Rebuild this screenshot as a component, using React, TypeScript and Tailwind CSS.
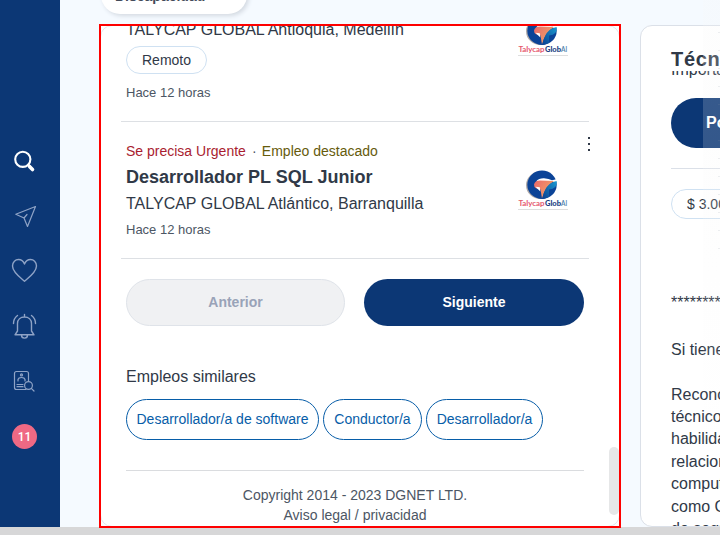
import React from "react";

const Logo = ({ className = "" }: { className?: string }) => (
  <svg className={className} width="52" height="42" viewBox="0 0 52 42">
    <defs>
      <linearGradient id="flame" x1="0" y1="0" x2="1" y2="0.6">
        <stop offset="0" stopColor="#e9686a" />
        <stop offset="1" stopColor="#f0a567" />
      </linearGradient>
      <linearGradient id="sea" x1="1" y1="0" x2="0" y2="1">
        <stop offset="0" stopColor="#1a9ad0" />
        <stop offset="1" stopColor="#0a3f91" />
      </linearGradient>
    </defs>
    <ellipse cx="22.500" cy="15.300" rx="14.500" ry="13.800" fill="#b0aaa8" />
    <ellipse cx="24" cy="14.800" rx="14.700" ry="14.200" fill="#0b4397" />
    <path d="M18 11.500 Q21 8 26 8.200 Q31 8.500 34 10.300 L37.300 9.500 L41 8 L41 12 L36 12 Z" fill="#fff" />
    <path d="M16 14.500 Q17 10.500 22 10.500 L36 11 Q27.500 16 24 28.500 L22.500 19.500 Q16 19 16 14.500 Z" fill="url(#flame)" />
    <path d="M38.700 11 Q39.500 19 31 19.500 L31 27 L24.300 29 Q27 13 38.700 11 Z" fill="url(#sea)" />
    <path d="M17.500 16.800 L21.800 17.200 L22.300 21.500 Z" fill="#fff" />
    <text x="0.500" y="36" fontSize="7.800" fontWeight="700" fontFamily="Lato, sans-serif" textLength="26" lengthAdjust="spacingAndGlyphs" fill="#e5576c">Talycap</text>
    <text x="27" y="36" fontSize="7.800" fontWeight="900" fontFamily="Lato, sans-serif" textLength="16" lengthAdjust="spacingAndGlyphs" fill="#173d80">Glob</text>
    <text x="43" y="36" fontSize="7.800" fontWeight="700" fontFamily="Lato, sans-serif" textLength="6" lengthAdjust="spacingAndGlyphs" fill="#5787b0">Al</text>
    <path d="M0 39.500H50" stroke="#dedede" strokeWidth="1" />
  </svg>
);

const Sidebar = () => (
  <aside className="w-[60px] shrink-0 bg-[#0c3775] text-[#8fa3c6]">
    <svg width="60" height="460" viewBox="0 0 60 460" fill="none" stroke="currentColor" strokeWidth="1.200" strokeLinecap="round" strokeLinejoin="round">
      <g stroke="#fff">
        <circle cx="22.800" cy="159.300" r="7.600" strokeWidth="2.100" />
        <path d="M28.300 164.800 L30 166.500" strokeWidth="2.400" />
        <path d="M29.500 166.500 L32.500 169.500" strokeWidth="3.600" />
      </g>
      <path d="M35.500 206.500 L15.800 214.300 L24 218 L27.500 226.500 Z M24 218 L27 214.500" />
      <path d="M24.500 281.300 C20 277.500 12.500 272 12.500 266 C12.500 261.800 15.500 259.500 18.500 259.500 C21.500 259.500 23.500 261.500 24.500 264 C25.500 261.500 27.500 259.500 30.500 259.500 C33.500 259.500 36.500 261.800 36.500 266 C36.500 272 29 277.500 24.500 281.300 Z" strokeWidth="1.400" />
      <path d="M24.500 314.500 V317 M17.500 331 V323.500 C17.500 319.500 20.500 317 24.500 317 C28.500 317 31.500 319.500 31.500 323.500 V331 L34 334.800 H15 Z M21.500 335 C21.500 339.200 27.500 339.200 27.500 335 M17.500 315.500 Q13.500 318.500 13.500 323.500 M31.500 315.500 Q35.500 318.500 35.500 323.500" strokeWidth="1.400" />
      <path d="M26 389.500 H16.500 Q14.500 389.500 14.500 387.500 V373.500 Q14.500 371.500 16.500 371.500 H26.500 Q28.500 371.500 28.500 373.500 V381 M18 381 V379.500 Q18.500 377.500 21.500 377.500 Q24.500 377.500 25 379.500 V381 M17 384.500 H23 M17 386.700 H23" />
      <circle cx="21.500" cy="374.900" r="1" />
      <circle cx="28.500" cy="385.500" r="3.900" />
      <path d="M31.300 388.300 L34 391" />
    </svg>
    <div className="-mt-9 ml-3 flex size-[25px] items-center justify-center rounded-full bg-[#ef6984] font-[Roboto,sans-serif] text-[12px] font-medium text-white">11</div>
  </aside>
);

const chips = [
  { label: "Desarrollador/a de software", width: "w-[193px]" },
  { label: "Conductor/a", width: "w-[99px]" },
  { label: "Desarrollador/a", width: "w-[117px]" },
];

const Results = () => (
  <section className="ml-[39px] flex w-[561px] shrink-0 flex-col">
    <div className="ml-0.5 flex h-[14px] w-[146px] shrink-0 items-end">
      <div className="h-[38px] w-[146px] shrink-0 rounded-full bg-white pt-[13px] pl-[14px] text-[14px] leading-[14px] font-bold text-[#434b59] shadow-[2px_2px_4px_#d4dae2]">Discapacidad</div>
    </div>
    <div className="relative mt-2.5 h-[504px] w-[522px] shrink-0 overflow-hidden border-2 border-[#fe0000] bg-white">
      <div className="absolute -inset-px rounded-xl border border-[#e3e8ee]" />
      <div className="-mt-2 ml-5 w-[468px]">
        <article className="flex h-[104px] justify-between border-b border-[#dde0e4] pr-[19px] pl-[5px]">
          <div className="text-[#303947]">
            <div className="mt-0.5 h-[20px] text-[16px] leading-5 whitespace-nowrap">TALYCAP GLOBAL Antioquia, Medellín</div>
            <div className="mt-[6px] flex h-7 w-[81px] items-center justify-center rounded-full border border-[#cfe1f2] text-[14px]">Remoto</div>
            <div className="mt-[9px] text-[13px] leading-5 text-[#4c5664]">Hace 12 horas</div>
          </div>
          <Logo className="-mt-[2px]" />
        </article>
        <article className="flex h-[137px] justify-between border-b border-[#dde0e4] pl-[5px]">
          <div className="whitespace-nowrap text-[#303947]">
            <div className="mt-[19px] flex h-5 text-[14px] leading-5 text-[#a91d30]">Se precisa Urgente<span className="w-[17px] text-center text-[#4c5664]">·</span><span className="-ml-px text-[#665b0c]">Empleo destacado</span></div>
            <div className="mt-1 h-6 text-[18px] leading-6 font-bold">Desarrollador PL SQL Junior</div>
            <div className="mt-[3px] h-6 text-[16px] leading-6">TALYCAP GLOBAL Atlántico, Barranquilla</div>
            <div className="mt-1 text-[13px] leading-5 text-[#4c5664]">Hace 12 horas</div>
          </div>
          <div className="-mr-[3px] flex w-[74px] justify-between">
            <Logo className="mt-12 shrink-0" />
            <div className="mt-[15px] mr-0.5 flex flex-col gap-1">
              <i className="size-0.5 bg-[#303947]" /><i className="size-0.5 bg-[#303947]" /><i className="size-0.5 bg-[#303947]" />
            </div>
          </div>
        </article>
      </div>
      <div className="ml-[25px] w-[458px]">
        <div className="mt-5 flex justify-between text-[14px] font-bold">
          <div className="flex h-[47px] w-[219px] items-center justify-center rounded-full border border-[#dfe3e9] bg-[#f0f1f3] text-[#99a3b8]">Anterior</div>
          <div className="flex h-[47px] w-[220px] items-center justify-center rounded-full bg-[#0c3775] text-white">Siguiente</div>
        </div>
        <h2 className="mt-[39px] text-[16px] leading-6 text-[#303947]">Empleos similares</h2>
        <div className="mt-[10px] flex gap-1">
          {chips.map((c) => (
            <div key={c.label} className={`${c.width} flex h-[41px] shrink-0 items-center justify-center rounded-full border border-[#075da8] text-[14px] whitespace-nowrap text-[#075da8]`}>{c.label}</div>
          ))}
        </div>
        <footer className="mt-[30px] border-t border-[#dadcdf] pt-[14px] text-center text-[14px] leading-5 text-[#4c5664]">
          Copyright 2014 - 2023 DGNET LTD.<br />Aviso legal / privacidad
        </footer>
      </div>
      <div className="absolute top-[421px] right-0 h-[68px] w-[10px] rounded-full bg-[#e6e7e8]" />
    </div>
  </section>
);

const lines = ["Reconocida empresa", "técnico o tecnólogo", "habilidades para", "relacionarse con", "computadores y", "como Google y", "de seguridad"];

const Detail = () => (
  <section className="-ml-5 mt-[25px] h-[502px] w-[300px] shrink-0 overflow-hidden rounded-xl border border-[#dbe0e8] bg-white pl-[30px] whitespace-nowrap text-[#303947]">
    <h1 className="mt-[21px] h-6 text-[20px] leading-6 font-bold tracking-[0.7px] [font-kerning:none]">Técnico</h1>
    <div className="h-[9px] overflow-hidden"><div className="-mt-[11px] text-[16px] leading-5">Importante empresa</div></div>
    <div className="mt-[18px] h-[50px] w-[240px] rounded-full bg-[#0c3775] pl-[35px] text-[16px] leading-[50px] font-bold text-white">Postularme</div>
    <div className="mt-5 border-t border-[#dbe0e8]" />
    <div className="mt-5 h-[30px] w-[140px] rounded-full border border-[#cfe1f2] pl-[15px] text-[14px] leading-7">$ 3.000.000</div>
    <div className="mt-[73px] h-[22px] text-[16px] leading-[22px]">**************</div>
    <div className="mt-[25px] h-[22px] text-[16px] leading-[22px]">Si tienes</div>
    <div className="mt-[22.600px] text-[16px] leading-[22.400px]">{lines.map((l) => <div key={l}>{l}</div>)}</div>
  </section>
);

export default function App() {
  return (
    <main className="relative h-[552px] w-[720px] overflow-hidden bg-white font-['Liberation_Sans',sans-serif]">
      <div className="h-[535px] bg-[#d7d7d8]">
        <div className="flex h-[527px] w-[720px] bg-[#f5faff]">
          <Sidebar />
          <Results />
          <Detail />
        </div>
      </div>
      {/* Translucent window edge fading over the detail card */}
      <div className="absolute top-0 left-[703px] h-[470px] w-[17px] bg-gradient-to-b from-[#f7f7f7]/20 via-[#f7f7f7]/15 to-transparent" />
      <div className="absolute top-8 left-[718px] flex w-0.5 flex-col gap-[17px] opacity-15">
        {Array.from({ length: 13 }, (_, i) => <i key={i} className="h-px w-0.5 bg-[#8b95a3]" />)}
      </div>
    </main>
  );
}
